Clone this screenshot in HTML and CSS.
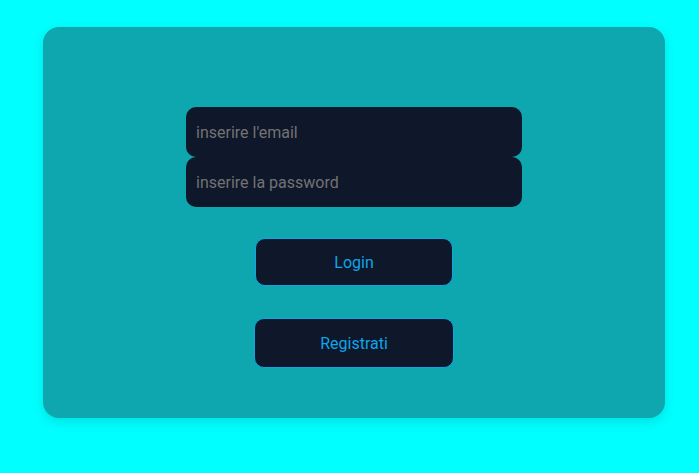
FILE: index.html
```html
<!DOCTYPE html>
<html lang="it">
<head>
<meta charset="utf-8">
<title>Login</title>
<link rel="stylesheet" href="styles.css">
</head>
<body>
<main class="page">
  <section class="card">
    <form class="form">
      <input class="field" type="email" placeholder="inserire l'email">
      <input class="field" type="password" placeholder="inserire la password">
      <button type="button" class="btn btn-login">Login</button>
      <button type="button" class="btn btn-register">Registrati</button>
    </form>
  </section>
</main>
</body>
</html>
```
FILE: styles.css
```css
* { box-sizing: border-box; }
html, body { margin: 0; padding: 0; }
body {
  background: #00ffff;
  font-family: Roboto, "Liberation Sans", sans-serif;
  width: 699px;
  height: 473px;
  overflow: hidden;
}
.page {
  padding: 27px 34px 0 43px;
}
.card {
  width: 622px;
  height: 391px;
  background: #0ea7b0;
  border-radius: 16px;
  box-shadow: 0 4px 12px rgba(0, 0, 0, 0.12);
  padding-top: 80px;
}
.form {
  display: flex;
  flex-direction: column;
  align-items: center;
}
.field {
  width: 336px;
  height: 50px;
  background: #0f172a;
  border: none;
  border-radius: 10px;
  padding: 0 10px;
  font-family: inherit;
  font-size: 16px;
  color: #d1d5db;
  outline: none;
}
.field::placeholder { color: #737373; }
.btn {
  background: #0f172a;
  border: 1px solid #0ea5e9;
  border-radius: 10px;
  color: #0ea5e9;
  font-family: inherit;
  font-size: 16px;
  cursor: pointer;
}
.btn-login {
  width: 198px;
  height: 48px;
  margin-top: 31px;
}
.btn-register {
  width: 200px;
  height: 50px;
  margin-top: 32px;
}
```
